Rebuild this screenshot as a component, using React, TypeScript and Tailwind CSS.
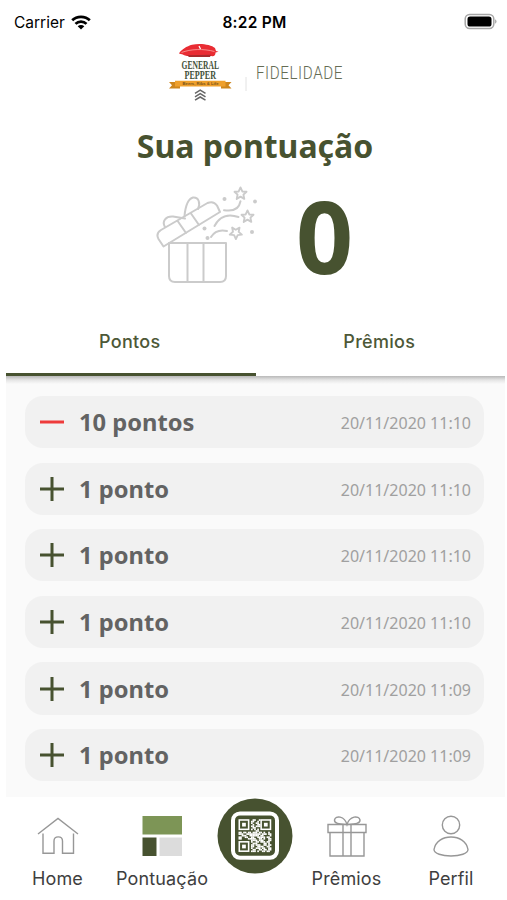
import React from 'react';

const history = [
  { label: '10 pontos', date: '20/11/2020 11:10', debit: true },
  { label: '1 ponto', date: '20/11/2020 11:10' },
  { label: '1 ponto', date: '20/11/2020 11:10' },
  { label: '1 ponto', date: '20/11/2020 11:10' },
  { label: '1 ponto', date: '20/11/2020 11:09' },
  { label: '1 ponto', date: '20/11/2020 11:09' },
];

// data modules only, the three finder squares are drawn on their own
const qrRows = [
  '000000000110010000000',
  '000000001100100000000',
  '000000001001100000000',
  '000000000100110000000',
  '000000001101110000000',
  '000000000110000000000',
  '000000001010100000000',
  '000000000001100000000',
  '110110110111011010010',
  '111001111111110111011',
  '001110011111101100001',
  '110011001100111110110',
  '110000111110011010011',
  '000000001111011100011',
  '000000001001101110110',
  '000000000111000011010',
  '000000001101110011011',
  '000000001100111100110',
  '000000001001110110011',
  '000000000110011011011',
  '000000001110100110110',
];

const StatusBar: React.FC = () => (
  <div className="h-[42px] px-[14px] pt-[2px] grid grid-cols-3 items-center text-black">
    <div className="flex items-center gap-[6px]">
      <span className="mt-px text-[15.5px]">Carrier</span>
      <svg width="20" height="15" viewBox="0 0 20 15" fill="none" stroke="#000" strokeWidth="2.7">
        <path d="M1.2 5.3C5.800 .7 14.200 .7 18.800 5.300" />
        <path d="M4.500 8.900c3-3 8-3 11 0" />
        <path d="M10 14.600 6.700 11.300c1.800-1.700 4.800-1.700 6.600 0Z" fill="#000" stroke="none" />
      </svg>
    </div>
    <span className="mt-px text-center text-[15.5px] font-semibold tracking-[0.25px] pl-[2px]">8:22 PM</span>
    <svg className="justify-self-end -mr-[5px]" width="34" height="18" viewBox="0 0 34 18">
      <rect x="1.2" y="1.5" width="28.600" height="14" rx="4.400" fill="#fff" stroke="#a6a6a6" strokeWidth="1.500" />
      <rect x="3.500" y="3.500" width="24" height="10" rx="2.600" fill="#000" />
      <path d="M31.300 6.300v4.500c1.500-.7 1.500-3.800 0-4.500Z" fill="#8a8a8a" />
    </svg>
  </div>
);

const Logo: React.FC = () => (
  <svg className="mx-auto block" width="210" height="62" viewBox="-12 0 210 62">
    {/* beret */}
    <path d="M18 11.500C20 8 26 4 31 2.800 39 .8 50 2.500 54 6l1 3 2.500.8-3 .7c.3 2.500-2 4.500-4 3.500H27c-3 0-4-1.500-9-2.500Z" fill="#e92c33" />
    <path d="m26 13.200 24-.4-1 2.200H28Z" fill="#a92a2c" />
    <path d="M20.500 10.500c9-3.500 22-4 33-1" fill="none" stroke="#f9a5a1" strokeWidth=".8" />
    <path d="m38 4 1.500 3" stroke="#fff" strokeWidth="1.300" />
    <g fontFamily="'Liberation Serif', serif" fontSize="13" fontWeight="700" fill="#435139">
      <text x="20.500" y="26.700" textLength="37.500" lengthAdjust="spacingAndGlyphs">GENERAL</text>
      <text x="23.500" y="37" textLength="31.500" lengthAdjust="spacingAndGlyphs">PEPPER</text>
    </g>
    <path d="M8 40h11v6.500H8l3-3.300ZM70.500 40H60v6.500h10.500l-3-3.300Z" fill="#ce861d" />
    <path d="M14 38.800h50.500v5.800H14Z" fill="#efa02c" />
    <text x="21.500" y="43.200" textLength="36" lengthAdjust="spacingAndGlyphs" fontFamily="'Liberation Sans', sans-serif" fontSize="4.300" fontWeight="700" fill="#7a5319">Beers, Ribs &amp; Life</text>
    <g fill="none" stroke="#666" strokeWidth="1.500">
      <path d="m34 51.400 5.200-3.200 5.300 3.200" />
      <path d="m34 54.800 5.200-3.200 5.300 3.200" />
      <path d="m34 58.200 5.200-3.200 5.300 3.200" />
    </g>
    <path d="M85 35v14" stroke="#e2e2e2" strokeWidth="1" />
    <text transform="translate(95 37) scale(.8 1)" textLength="108" fontFamily="Roboto, sans-serif" fontWeight="300" fontSize="19" fill="#656c54">FIDELIDADE</text>
  </svg>
);

const star = 'M0-7 2.100-2.400 7-2 3.400 1.300 4.400 6.300 0 3.700-4.400 6.300-3.400 1.300-7-2-2.100-2.400Z';

const OpenGift: React.FC = () => (
  <svg width="104" height="100" viewBox="0 0 104 100" fill="none" stroke="#cbcbcb" strokeWidth="2" strokeLinejoin="round" strokeLinecap="round">
    <path d="M13 58h57v33q0 6-6 6H19q-6 0-6-6ZM31.500 58v39M47.500 58v39" />
    <path d="M7.500 61.500 2.500 54q-3-5.500 2.500-9L51.500 18q6-2.500 9.500 2.500l3 6.500ZM22 36.500l8 11.500M35 28.500l8 11.500" />
    <path d="M9 42C5.500 36 10 31 17 31.500l12 2M28.500 31C29.500 20 32 14 37 12.500c6-.5 7.500 6 5 11.500" />
    <path d="M68 25.200c9 1.500 15-1 16.500-9M58.500 41c5-10 14-12.500 24-9M55 52c3-5 9-7.500 16-6" />
    <g strokeWidth="2.200">
      <path d={star} transform="translate(84.500 8.500) scale(.86)" />
      <path d={star} transform="translate(91.500 31.500) scale(.86)" />
      <path d={star} transform="translate(80 47.500) rotate(36) scale(.86)" />
    </g>
    <g fill="#cbcbcb" stroke="none">
      <circle cx="68.500" cy="14" r="2" />
      <circle cx="99" cy="16.500" r="1.900" />
      <circle cx="48.500" cy="43.500" r="2" />
      <circle cx="51.500" cy="53" r="2" />
      <circle cx="96" cy="47" r="2" />
    </g>
  </svg>
);

const QrButton: React.FC = () => (
  <svg className="block -mt-[1px] ml-[3px]" width="76" height="80" viewBox="0 0 76 80">
    <circle cx="38" cy="40" r="37.500" fill="#475230" />
    <rect x="16" y="17.400" width="44" height="44.400" rx="7" fill="none" stroke="#fff" strokeWidth="4" />
    <g transform="translate(21.500 23.200) scale(1.560)" fill="#fff">
      {[[0, 0], [14, 0], [0, 14]].map(([x, y]) => (
        <g key={`${x}-${y}`}>
          <rect x={x + 0.5} y={y + 0.5} width="6" height="6" fill="none" stroke="#fff" strokeWidth="1" />
          <rect x={x + 2.3} y={y + 2.3} width="2.400" height="2.400" />
        </g>
      ))}
      {qrRows.map((row, y) =>
        row.split('').map((cell, x) =>
          cell === '1' ? <rect key={`${x}-${y}`} x={x} y={y} width="1.100" height="1.100" /> : null
        )
      )}
    </g>
  </svg>
);

const NavItem: React.FC<{ label: string; children: React.ReactNode }> = ({ label, children }) => (
  <div className="flex flex-col items-center pt-[17px]">
    <svg width="44" height="44" viewBox="0 0 44 44" fill="none" stroke="#979797" strokeWidth="1.400">
      {children}
    </svg>
    <span className="mt-[8px] text-[18px] leading-[26px] tracking-[0.15px] text-[#3e3e3e] whitespace-nowrap">{label}</span>
  </div>
);

const App: React.FC = () => {
  return (
    <div className="w-[507px] h-[900px] overflow-hidden bg-white font-['Inter',sans-serif] flex flex-col">
      <StatusBar />
      <Logo />

      <h1 className="mt-[20px] pl-[3px] text-center font-['Noto_Sans',sans-serif] font-bold text-[32px] leading-[44px] text-[#475230]">
        Sua pontuação
      </h1>

      <div className="mt-[17px] h-[100px] pl-[156px] flex items-center">
        <OpenGift />
        <span className="ml-[36px] font-['Noto_Sans',sans-serif] font-bold text-[100px] leading-[100px] text-[#475230]">0</span>
      </div>

      <div className="mt-[23px] ml-[6px] mr-[2px] h-[68px] shrink-0 grid grid-cols-2 text-center text-[18px] font-medium tracking-[0.3px] text-[#4d5837]">
        <div className="pt-[20px] pr-[2px] border-b-[3px] border-[#475230]">Pontos</div>
        <div className="pt-[20px] pr-[2px]">Prêmios</div>
      </div>

      <div className="ml-[6px] mr-[2px] h-[421px] shrink-0 bg-[#fafafa]">
        <div className="h-[8px] bg-linear-to-b from-[#b9b9b9] via-[#e5e5e5] to-[#fafafa]" />
        <ul className="pt-[12px] pl-[19px] pr-[21px] flex flex-col gap-[14.300px] font-['Noto_Sans',sans-serif]">
          {history.map((item, i) => (
            <li key={i} className="h-[52.300px] rounded-[18px] bg-[#f1f1f1] pl-[15px] pr-[13px] flex items-center">
              <svg width="24" height="24" viewBox="0 0 24 24" fill="none" stroke={item.debit ? '#ee3b3b' : '#475230'} strokeWidth="3">
                <path d={item.debit ? 'M0 12h24' : 'M0 12h24M12 0v24'} />
              </svg>
              <span className="ml-[15px] mt-[1.500px] text-[23.700px] font-bold text-[#636363]">{item.label}</span>
              <span className="ml-auto mt-[2px] text-[16px] text-[#a0a0a0]">{item.date}</span>
            </li>
          ))}
        </ul>
      </div>

      <nav className="h-[103px] shrink-0 pl-[5px] pr-[3px] grid grid-cols-[105px_104px_81px_103px_106px]">
        <NavItem label="Home">
          <path d="m2 20 20-15.500L42 20M7 19.500V39.200h11V27c0-5.500 8.500-5.500 8.500 0v12.200h11V19.500" />
        </NavItem>
        <NavItem label="Pontuação">
          <g stroke="none">
            <path d="M2.500 2H42v18.500H2.500Z" fill="#7d9556" />
            <path d="M2.500 23.500h14V42h-14Z" fill="#475230" />
            <path d="M19.500 23.500H42V42H19.500Z" fill="#dcdcdc" />
          </g>
        </NavItem>
        <QrButton />
        <NavItem label="Prêmios">
          <path d="M3 10.500h38v8H3ZM5 18.500h34V42H5ZM18 10.500V42M26 10.500V42" />
          <path d="M22 10.500C16 10 9 10 9.500 6c1-5 10-4 12.500 4.500C24.500 2 34 1 35 6c.5 4-7 4-13 4.500Z" />
        </NavItem>
        <NavItem label="Perfil">
          <circle cx="22" cy="11" r="8.700" />
          <path d="M5 35.500C6.500 27 14 23 22 23s15.500 4 17 12.500c0 4-8 6.500-17 6.500S5 39.500 5 35.500Z" />
        </NavItem>
      </nav>
    </div>
  );
};

export default App;
